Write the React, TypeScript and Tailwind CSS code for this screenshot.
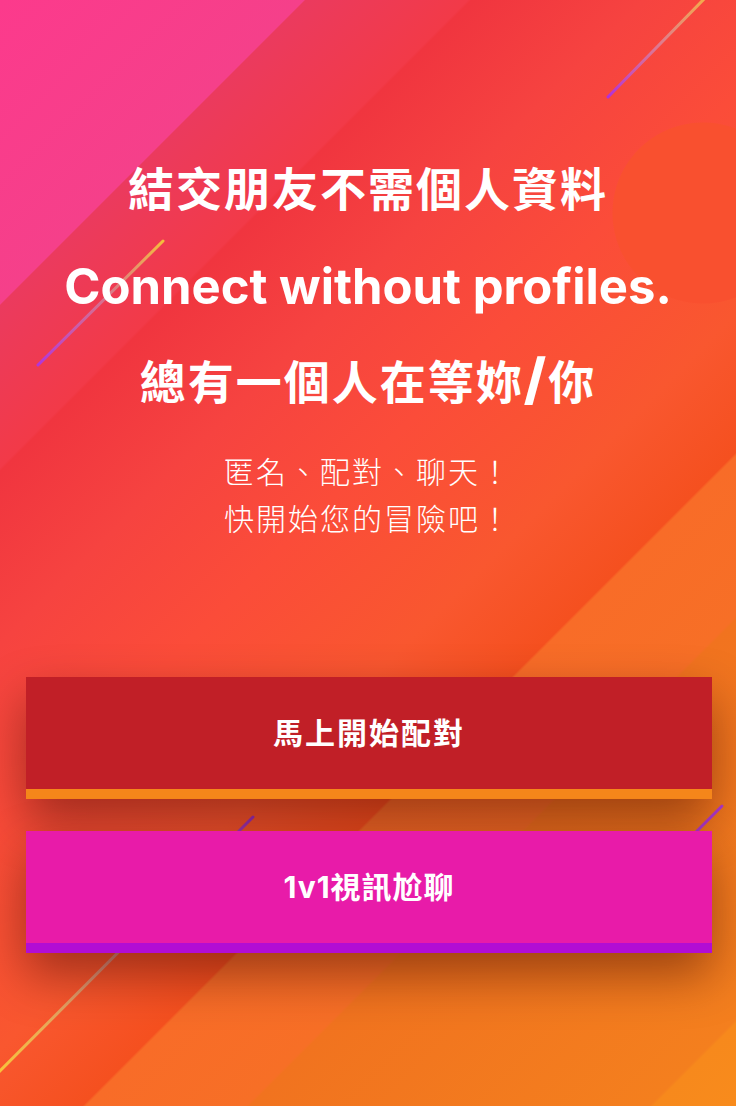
import React from "react";

function Streaks() {
  return (
    <svg
      className="pointer-events-none absolute inset-0 h-full w-full"
      viewBox="0 0 736 1106"
      preserveAspectRatio="none"
    >
      <defs>
        <linearGradient id="s1" gradientUnits="userSpaceOnUse" x1="706" y1="-3" x2="608" y2="97">
          <stop offset="0" stopColor="#f3c04a" stopOpacity="0.85" />
          <stop offset="0.5" stopColor="#d784a8" stopOpacity="0.8" />
          <stop offset="1" stopColor="#b12fda" />
        </linearGradient>
        <linearGradient id="s2" gradientUnits="userSpaceOnUse" x1="163" y1="241" x2="38" y2="365">
          <stop offset="0" stopColor="#f5bd3c" />
          <stop offset="0.5" stopColor="#cf7fa6" stopOpacity="0.75" />
          <stop offset="1" stopColor="#b035dc" />
        </linearGradient>
        <linearGradient id="s3" gradientUnits="userSpaceOnUse" x1="253" y1="817" x2="-2" y2="1073">
          <stop offset="0" stopColor="#9a2fc4" />
          <stop offset="0.45" stopColor="#c98a9a" stopOpacity="0.8" />
          <stop offset="1" stopColor="#f8c43a" />
        </linearGradient>
        <linearGradient id="s4" gradientUnits="userSpaceOnUse" x1="722" y1="806" x2="600" y2="928">
          <stop offset="0" stopColor="#b43bd8" />
          <stop offset="1" stopColor="#a336c8" />
        </linearGradient>
      </defs>
      <line x1="706" y1="-3" x2="608" y2="97" stroke="url(#s1)" strokeWidth="3" strokeLinecap="round" />
      <line x1="163" y1="241" x2="38" y2="365" stroke="url(#s2)" strokeWidth="3" strokeLinecap="round" />
      <line x1="253" y1="817" x2="-2" y2="1073" stroke="url(#s3)" strokeWidth="3" strokeLinecap="round" />
      <line x1="722" y1="806" x2="600" y2="928" stroke="url(#s4)" strokeWidth="3" strokeLinecap="round" />
    </svg>
  );
}

export default function App() {
  return (
    <div className="relative h-[1106px] w-full overflow-hidden [background-image:radial-gradient(circle_at_703px_213px,#f9502f_90px,transparent_91px),linear-gradient(135deg,#fc3a8c_0%,#f5408a_16.5%,#eb3a5e_16.6%,#f23a48_25.4%,#f0353f_25.6%,#f64340_35%,#fb4c39_45%,#f9572f_57%,#f5501f_64.5%,#f86c28_64.7%,#f76f26_73.4%,#f1731f_73.6%,#f47f1e_95.3%,#f7891c_95.5%,#f88b1c_100%)]">
      <Streaks />
      <div className="relative z-10 flex flex-col items-center pt-[161px] text-center text-white font-['Inter','Noto_Sans_CJK_TC',sans-serif]">
        <h1 className="text-[46px] leading-[56px] font-bold tracking-[2px]">結交朋友不需個人資料</h1>
        <h2 className="mt-[40px] text-[49px] leading-[60px] font-bold">Connect without profiles.</h2>
        <h2 className="mt-[34px] h-[56px] text-[46px] leading-[56px] font-bold tracking-[2px]">
          總有一個人在等妳<span className="text-[56px] leading-none font-extrabold">/</span>你
        </h2>
        <p className="mt-[42px] text-[30px] leading-[47px] font-light tracking-[2px]">
          匿名、配對、聊天！
          <br />
          快開始您的冒險吧！
        </p>

        <div className="mt-[134px] flex w-full flex-col gap-[32px] pl-[26px] pr-[24px]">
          <button className="flex h-[122px] w-full items-center justify-center border-b-[10px] border-[#f5861a] bg-[#c11f27] text-[30px] font-bold tracking-[2px] text-white shadow-[0_22px_50px_rgba(50,0,0,0.45)]">
            馬上開始配對
          </button>
          <button className="flex h-[122px] w-full items-center justify-center border-b-[10px] border-[#b20dd4] bg-[#e81ba9] text-[30px] font-bold tracking-[1px] text-white shadow-[0_22px_50px_rgba(50,0,0,0.45)]">
            1v1視訊尬聊
          </button>
        </div>
      </div>
    </div>
  );
}
